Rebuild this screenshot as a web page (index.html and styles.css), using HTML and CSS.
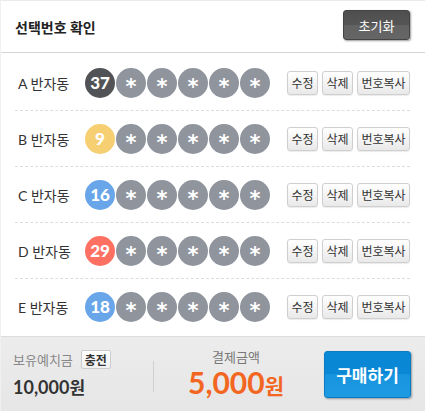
FILE: index.html
```html
<!DOCTYPE html>
<html lang="ko">
<head>
    <meta charset="UTF-8">
    <title>선택번호 확인</title>
    <link rel="stylesheet" href="styles.css">
</head>
<body>
    <div class="panel">
        <div class="panel-head">
            <h2>선택번호 확인</h2>
            <button class="reset-btn">초기화</button>
        </div>

        <ul class="pick-list">
            <li class="pick-row">
                <span class="pick-label">A 반자동</span>
                <span class="balls">
                    <span class="ball gray">37</span>
                    <span class="ball empty">*</span>
                    <span class="ball empty">*</span>
                    <span class="ball empty">*</span>
                    <span class="ball empty">*</span>
                    <span class="ball empty">*</span>
                </span>
                <span class="row-btns">
                    <button class="mini-btn">수정</button>
                    <button class="mini-btn">삭제</button>
                    <button class="mini-btn wide">번호복사</button>
                </span>
            </li>
            <li class="pick-row">
                <span class="pick-label">B 반자동</span>
                <span class="balls">
                    <span class="ball yellow">9</span>
                    <span class="ball empty">*</span>
                    <span class="ball empty">*</span>
                    <span class="ball empty">*</span>
                    <span class="ball empty">*</span>
                    <span class="ball empty">*</span>
                </span>
                <span class="row-btns">
                    <button class="mini-btn">수정</button>
                    <button class="mini-btn">삭제</button>
                    <button class="mini-btn wide">번호복사</button>
                </span>
            </li>
            <li class="pick-row">
                <span class="pick-label">C 반자동</span>
                <span class="balls">
                    <span class="ball blue">16</span>
                    <span class="ball empty">*</span>
                    <span class="ball empty">*</span>
                    <span class="ball empty">*</span>
                    <span class="ball empty">*</span>
                    <span class="ball empty">*</span>
                </span>
                <span class="row-btns">
                    <button class="mini-btn">수정</button>
                    <button class="mini-btn">삭제</button>
                    <button class="mini-btn wide">번호복사</button>
                </span>
            </li>
            <li class="pick-row">
                <span class="pick-label">D 반자동</span>
                <span class="balls">
                    <span class="ball red">29</span>
                    <span class="ball empty">*</span>
                    <span class="ball empty">*</span>
                    <span class="ball empty">*</span>
                    <span class="ball empty">*</span>
                    <span class="ball empty">*</span>
                </span>
                <span class="row-btns">
                    <button class="mini-btn">수정</button>
                    <button class="mini-btn">삭제</button>
                    <button class="mini-btn wide">번호복사</button>
                </span>
            </li>
            <li class="pick-row">
                <span class="pick-label">E 반자동</span>
                <span class="balls">
                    <span class="ball blue">18</span>
                    <span class="ball empty">*</span>
                    <span class="ball empty">*</span>
                    <span class="ball empty">*</span>
                    <span class="ball empty">*</span>
                    <span class="ball empty">*</span>
                </span>
                <span class="row-btns">
                    <button class="mini-btn">수정</button>
                    <button class="mini-btn">삭제</button>
                    <button class="mini-btn wide">번호복사</button>
                </span>
            </li>
        </ul>

        <div class="panel-foot">
            <div class="deposit">
                <div class="deposit-top">
                    <span class="foot-label">보유예치금</span>
                    <button class="charge-btn">충전</button>
                </div>
                <div class="deposit-amount">10,000<span class="won">원</span></div>
            </div>
            <div class="divider"></div>
            <div class="pay">
                <div class="foot-label">결제금액</div>
                <div class="pay-amount">5,000<span class="won">원</span></div>
            </div>
            <button class="buy-btn">구매하기</button>
        </div>
    </div>
</body>
</html>
```

FILE: styles.css
```css
body {
    margin: 0;
    background: #fff;
    font-family: Lato, "Noto Sans CJK KR", sans-serif;
    color: #333;
}
button {
    font-family: inherit;
    cursor: pointer;
}
.panel {
    width: 425px;
    height: 411px;
    border-top: 1px solid #ebebeb;
    border-left: 1px solid #f0f0f0;
    box-sizing: border-box;
    overflow: hidden;
}
.panel-head {
    height: 51px;
    display: flex;
    align-items: center;
    justify-content: space-between;
    padding: 0 15px 0 14px;
    border-bottom: 1px solid #d4d4d4;
}
.panel-head h2 {
    margin: 0;
    font-size: 14px;
    font-weight: bold;
    color: #222;
}
.reset-btn {
    width: 67px;
    height: 30px;
    margin-top: -3px;
    border: 1px solid #444;
    border-radius: 3px;
    background: linear-gradient(#4f4f4f 0%, #555 50%, #626262 50%, #666 100%);
    color: #fff;
    font-size: 13px;
    box-shadow: 1px 1px 2px rgba(0, 0, 0, 0.4);
}
.pick-list {
    list-style: none;
    margin: 0;
    padding: 2px 15px 2px 14px;
}
.pick-row {
    height: 55px;
    display: flex;
    align-items: center;
    border-bottom: 1px dashed #ddd;
}
.pick-row:last-child {
    border-bottom: none;
}
.pick-label {
    width: 67px;
    padding-left: 3px;
    font-size: 14px;
    color: #333;
}
.balls {
    display: flex;
    gap: 1px;
}
.ball {
    width: 30px;
    height: 30px;
    border-radius: 50%;
    display: flex;
    align-items: center;
    justify-content: center;
    color: #fff;
    font-size: 17px;
    font-weight: 900;
}
.ball.gray { background: #525357; }
.ball.yellow { background: #f5cf72; }
.ball.blue { background: #69a6e9; }
.ball.red { background: #fd7062; }
.ball.empty {
    background: #8f949d;
    font-family: "DejaVu Sans", sans-serif;
    font-size: 21px;
    font-weight: bold;
    padding-top: 9px;
    box-sizing: border-box;
}
.row-btns {
    display: flex;
    gap: 4px;
    margin-left: auto;
}
.mini-btn {
    width: 31px;
    height: 24px;
    padding: 0;
    border: 1px solid #cfcfcf;
    border-radius: 3px;
    background: linear-gradient(#fff, #e9e9e9);
    box-shadow: 0 1px 1px rgba(0, 0, 0, 0.08);
    color: #333;
    font-size: 12px;
}
.mini-btn.wide {
    width: 53px;
}
.panel-foot {
    height: 74px;
    display: flex;
    align-items: center;
    padding: 0 14px 0 12px;
    border-top: 1px solid #dcdcdc;
    background: linear-gradient(#ececec, #e6e6e6);
}
.deposit {
    width: 140px;
}
.deposit-top {
    display: flex;
    align-items: center;
    gap: 8px;
}
.foot-label {
    font-size: 13px;
    color: #888;
}
.charge-btn {
    width: 30px;
    height: 19px;
    padding: 0;
    border: 1px solid #ccc;
    border-radius: 2px;
    background: linear-gradient(#fff, #f0f0f0);
    color: #333;
    font-size: 12px;
    font-weight: bold;
}
.deposit-amount {
    margin-top: 8px;
    font-size: 18px;
    font-weight: bold;
    color: #333;
    line-height: 20px;
}
.deposit-amount .won {
    font-size: 17px;
}
.divider {
    width: 1px;
    height: 31px;
    background: #d0d0d0;
    margin-top: 4px;
}
.pay {
    flex: 1;
    text-align: center;
    padding-right: 6px;
}
.pay .foot-label {
    color: #777;
}
.pay-amount {
    font-size: 30px;
    font-weight: bold;
    color: #f36621;
    line-height: 32px;
}
.pay-amount .won {
    font-size: 21px;
}
.buy-btn {
    width: 87px;
    height: 47px;
    margin-top: 1px;
    border: 1px solid #0a7cc4;
    border-radius: 3px;
    background: linear-gradient(#0988d7 0%, #0a87d5 50%, #1794dd 50%, #1c9ae2 100%);
    box-shadow: 1px 1px 2px rgba(0, 0, 0, 0.35);
    color: #fff;
    font-size: 17px;
    font-weight: bold;
}
```
